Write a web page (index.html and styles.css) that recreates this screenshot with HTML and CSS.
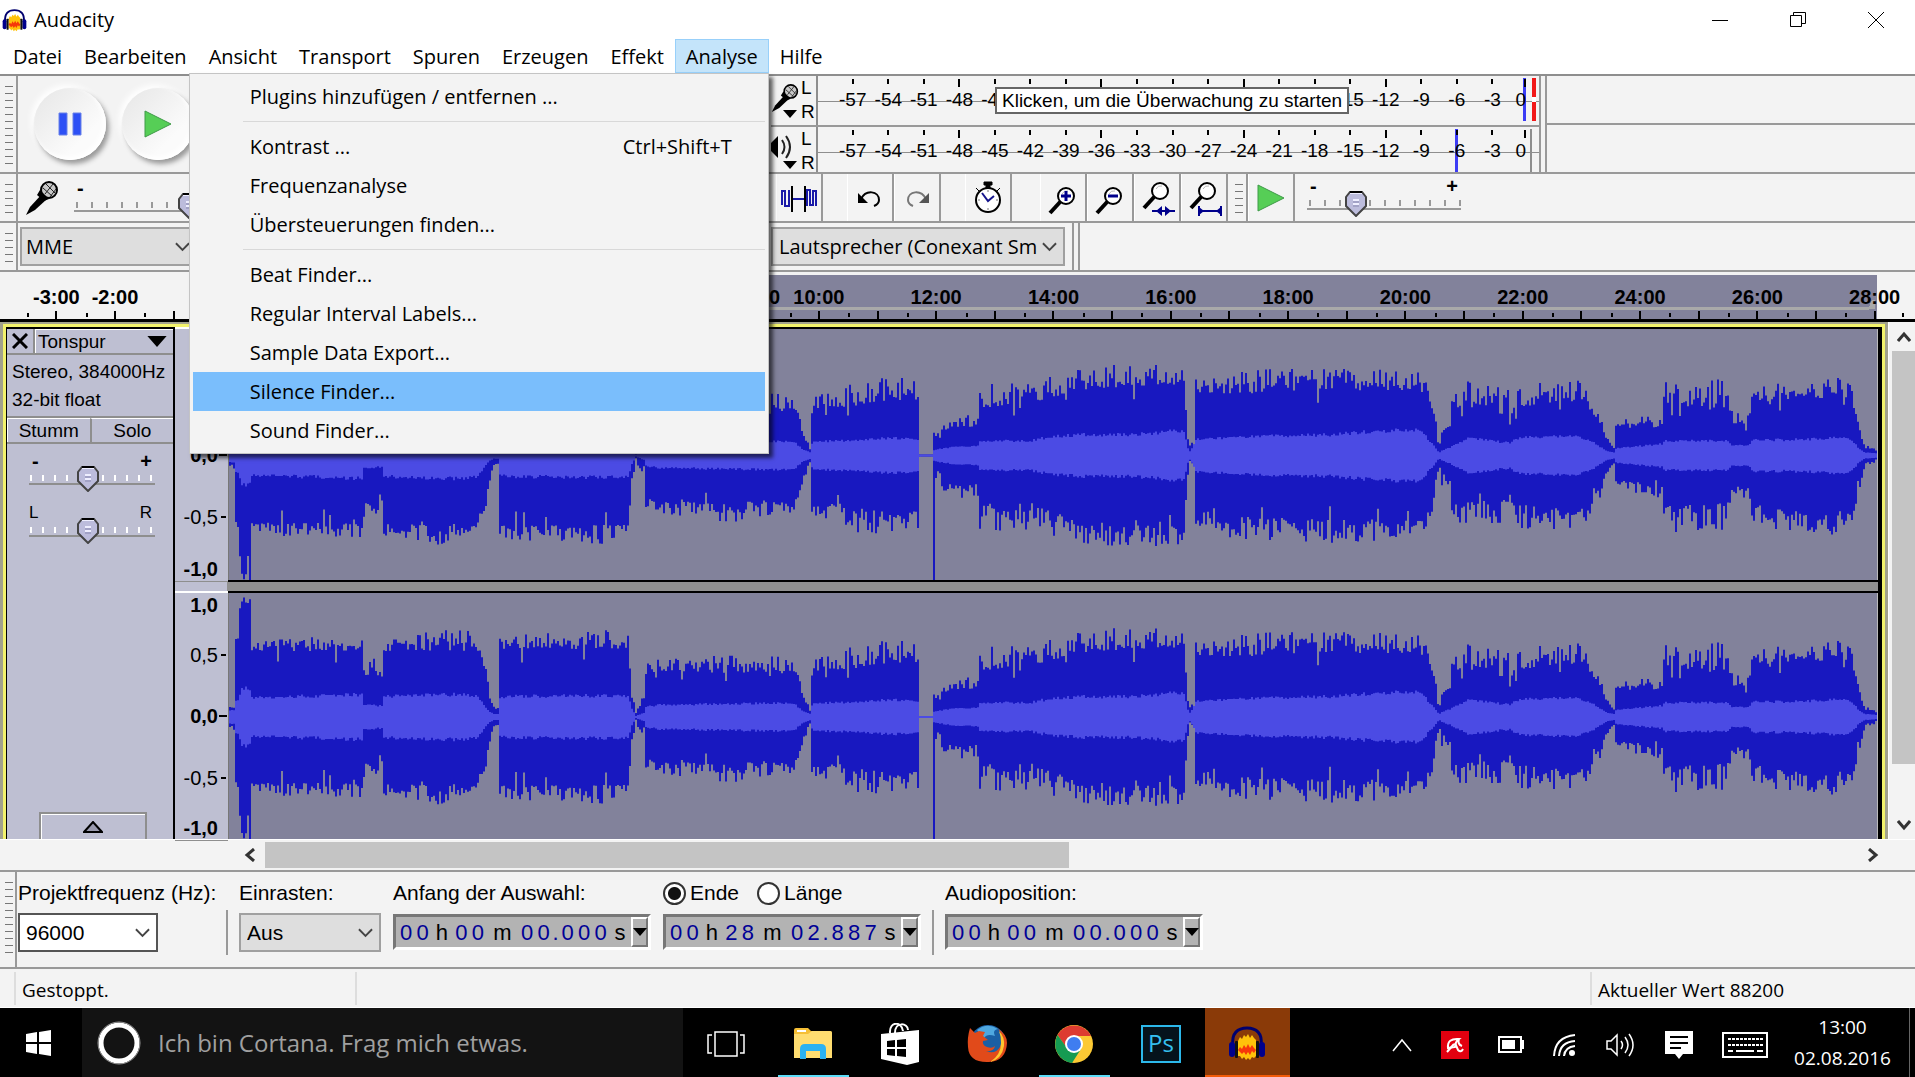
FILE: index.html
```html
<!DOCTYPE html>
<html lang="de">
<head>
    <meta charset="UTF-8">
    <meta name="viewport" content="width=device-width, initial-scale=1.0">
    <title>Audacity</title>
    <link rel="stylesheet" href="styles.css">
</head>
<body>
    <svg width="0" height="0" class="sprites" aria-hidden="true">
        <symbol id="audacity" viewBox="0 0 38 34">
            <path d="M5 20C3 7 10 2 19 2s16 5 14 18" fill="none" stroke="#00006e" stroke-width="3"/>
            <path d="M10 30V15l2-4 2 2 2-4 2 2 2-3 2 4 2-3 2 3 2 2v16l-2 2-2-1-2 3-2-2-2 2-2-3-2 2-2-3z" fill="#ffc20a"/>
            <path d="M10 24l2-3 2 2 2-4 2 3 2-4 2 4 2-3 2 3 2 2-2 3-2-2-2 4-2-3-2 3-2-3-2 2-2-2z" fill="#f6380a"/>
            <rect x="1" y="16" width="6" height="15" rx="3" fill="#00008c"/>
            <rect x="7" y="15" width="3" height="17" rx="1" fill="#111"/>
            <rect x="31" y="16" width="6" height="15" rx="3" fill="#00008c"/>
            <rect x="28" y="15" width="3" height="17" rx="1" fill="#111"/>
        </symbol>
        <symbol id="mic" viewBox="0 0 34 36">
            <path d="M1 35l4-8L17 14l5 5L10 30z" fill="#000"/>
            <circle cx="24" cy="10" r="8" fill="#c8c8c8" stroke="#000" stroke-width="2"/>
            <path d="M18 8l9 8M21 4l9 9M20 14l8-10M25 17l6-8" stroke="#222" stroke-width="1"/>
            <path d="M15 10l9 9-5 2-7-6z" fill="#000"/>
        </symbol>
        <symbol id="chevron" viewBox="0 0 16 10">
            <path d="M1 1l7 7 7-7" fill="none" stroke="#444" stroke-width="2"/>
        </symbol>
        <symbol id="caret" viewBox="0 0 14 8"><path d="M0 0h14L7 8z"/></symbol>
        <symbol id="play" viewBox="0 0 28 28">
            <path d="M1 1l26 13L1 27z" fill="#56ce56" stroke="#3f9a48"/>
        </symbol>
        <symbol id="lens" viewBox="0 0 36 36">
            <path d="M5 28L16 16" stroke="#000" stroke-width="4"/>
            <circle cx="21" cy="11" r="8" fill="#fff" stroke="#000" stroke-width="2"/>
            <path d="M17 9q2-4 6-3" fill="none" stroke="#bbb"/>
        </symbol>
    </svg>

    <header class="title-bar">
        <svg class="app-icon"><use href="#audacity"/></svg>
        <h1 class="app-title">Audacity</h1>
        <button class="window-button" aria-label="Minimieren"><svg width="18" height="18"><path d="M1 9.500h16" stroke="#000"/></svg></button>
        <button class="window-button" aria-label="Wiederherstellen"><svg width="18" height="18"><path d="M1.500 4.500h11v11h-11zM4.500 4V1.500h12v11H13" fill="none" stroke="#000"/></svg></button>
        <button class="window-button" aria-label="Schließen"><svg width="18" height="18"><path d="M1 1l16 16M17 1L1 17" stroke="#000"/></svg></button>
    </header>

    <nav class="menu-bar">
        <button class="menu-title">Datei</button>
        <button class="menu-title">Bearbeiten</button>
        <button class="menu-title">Ansicht</button>
        <button class="menu-title">Transport</button>
        <button class="menu-title">Spuren</button>
        <button class="menu-title">Erzeugen</button>
        <button class="menu-title">Effekt</button>
        <div class="menu-open">
            <button class="menu-title active" aria-expanded="true">Analyse</button>
            <div class="menu-list">
                <button class="menu-item">Plugins hinzufügen / entfernen ...</button>
                <hr class="menu-line">
                <button class="menu-item">Kontrast ...<span class="shortcut">Ctrl+Shift+T</span></button>
                <button class="menu-item">Frequenzanalyse</button>
                <button class="menu-item">Übersteuerungen finden...</button>
                <hr class="menu-line">
                <button class="menu-item">Beat Finder...</button>
                <button class="menu-item">Regular Interval Labels...</button>
                <button class="menu-item">Sample Data Export...</button>
                <button class="menu-item selected">Silence Finder...</button>
                <button class="menu-item">Sound Finder...</button>
            </div>
        </div>
        <button class="menu-title">Hilfe</button>
    </nav>

    <section class="toolbars">
        <div class="toolbar-row tall">
            <div class="toolbar-left">
                <span class="grabber"></span>
                <button class="transport" aria-label="Pause"><svg width="24" height="24"><path d="M1 1h8v22H1zM15 1h8v22h-8z" fill="#2d50f5" stroke="#6a82e8"/></svg></button>
                <button class="transport" aria-label="Wiedergabe"><svg width="28" height="28"><use href="#play"/></svg></button>
            </div>
            <div class="meters">
                <div class="meter-row">
                    <div class="meter-source">
                        <svg width="28" height="36"><use href="#mic"/></svg>
                        <svg class="meter-caret"><use href="#caret"/></svg>
                    </div>
                    <div class="meter-sides"><span>L</span><span>R</span></div>
                    <div class="meter record">
                        <div class="meter-scale"></div>
                        <span class="meter-end"></span>
                    </div>
                    <span class="tooltip">Klicken, um die Überwachung zu starten</span>
                </div>
                <div class="meter-row">
                    <div class="meter-source">
                        <svg width="28" height="36"><path d="M11 9q5 7 0 14M15 5q8 11 0 22" fill="none" stroke="#222" stroke-width="2"/><path d="M0 12l7-7v22l-7-7z"/></svg>
                        <svg class="meter-caret"><use href="#caret"/></svg>
                    </div>
                    <div class="meter-sides"><span>L</span><span>R</span></div>
                    <div class="meter playback">
                        <div class="meter-scale"></div>
                        <span class="meter-end"></span>
                    </div>
                </div>
            </div>
            <span class="toolbar-end"></span>
            <div class="toolbar-empty"><span></span><span></span></div>
        </div>

        <div class="toolbar-row">
            <div class="toolbar-left">
                <span class="grabber"></span>
                <svg class="mixer-icon"><use href="#mic"/></svg>
                <div class="slider">
                    <div class="slider-signs"><span>-</span><span>+</span></div>
                    <input type="range" aria-label="Aufnahmelautstärke" min="0" max="100" value="79">
                </div>
            </div>
            <div class="tool-group">
                <button class="tool" aria-label="Stille"><svg width="38" height="36"><path d="M2 25V11h3v15h4V10M27 26V10h3v15h3V11h3v15M12 19h13" fill="none" stroke="#1a1aa8" stroke-width="2"/><path d="M12 6v26M25 6v26" stroke="#000" stroke-width="2"/></svg></button>
            </div>
            <div class="tool-group">
                <button class="tool" aria-label="Rückgängig"><svg width="36" height="36"><path d="M9 19C14 9 27 11 27 20q0 4-5 6" fill="none" stroke="#000" stroke-width="2"/><path d="M6 13v10h10z"/></svg></button>
                <button class="tool" aria-label="Wiederherstellen"><svg width="36" height="36"><path d="M27 19C22 9 9 11 9 20q0 4 5 6" fill="none" stroke="#777" stroke-width="2"/><path d="M30 13v10H20z" fill="#555"/></svg></button>
            </div>
            <div class="tool-group">
                <button class="tool" aria-label="Sync"><svg width="36" height="36"><circle cx="18" cy="20" r="12" fill="#fff" stroke="#000" stroke-width="2"/><path d="M14 2h8v3h-8zM16 4h4v4h-4zM6 8l4 4M30 8l-4 4" stroke="#000" stroke-width="1"/><path d="M12 13l6 8 6-5" fill="none" stroke="#15158c" stroke-width="2"/><path d="M18 10v2M18 28v2M8 20h2M26 20h2" stroke="#777"/></svg></button>
            </div>
            <div class="tool-group">
                <button class="tool" aria-label="Vergrößern"><svg width="36" height="36"><use href="#lens" y="5"/><path d="M21 11v10M16 16h10" stroke="#00008c" stroke-width="3"/></svg></button>
                <button class="tool" aria-label="Verkleinern"><svg width="36" height="36"><use href="#lens" y="5"/><path d="M16 16h10" stroke="#00008c" stroke-width="3"/></svg></button>
                <button class="tool" aria-label="Auswahl einpassen"><svg width="36" height="36"><use href="#lens"/><path d="M13 31h23" stroke="#00008c" stroke-width="2"/><path d="M23 26v10l-6-5zM26 26v10l6-5z" fill="#00008c"/></svg></button>
                <button class="tool" aria-label="Projekt einpassen"><svg width="36" height="36"><use href="#lens"/><path d="M13 31h22M13 26v10M35 26v10" stroke="#00008c" stroke-width="2"/><path d="M13 27l5 4-5 4zM35 27l-5 4 5 4z" fill="#00008c"/></svg></button>
            </div>
            <span class="grabber"></span>
            <button class="tool" aria-label="Mit Geschwindigkeit abspielen"><svg width="28" height="28"><use href="#play"/></svg></button>
            <div class="slider">
                <div class="slider-signs"><span>-</span><span>+</span></div>
                <input type="range" aria-label="Wiedergabegeschwindigkeit" min="0" max="100" value="29">
            </div>
        </div>

        <div class="toolbar-row">
            <div class="toolbar-left">
                <span class="grabber"></span>
                <div class="combo host">
                    <select aria-label="Audio-Host"><option>MME</option></select>
                    <svg><use href="#chevron"/></svg>
                </div>
            </div>
            <div class="combo device">
                <select aria-label="Wiedergabegerät"><option>Lautsprecher (Conexant Sm</option></select>
                <svg><use href="#chevron"/></svg>
            </div>
            <span class="toolbar-end"></span>
        </div>
    </section>

    <div class="time-ruler" id="timeRuler"></div>

    <main class="workspace">
        <div class="track">
            <section class="track-panel">
                <div class="track-head">
                    <button class="track-close" aria-label="Spur schließen"><svg width="16" height="16"><path d="M1 1l14 14M15 1L1 15" stroke="#000" stroke-width="3"/></svg></button>
                    <button class="track-name">Tonspur<svg width="20" height="11"><use href="#caret"/></svg></button>
                </div>
                <p class="track-info">Stereo, 384000Hz<br>32-bit float</p>
                <div class="track-toggles">
                    <button>Stumm</button>
                    <button>Solo</button>
                </div>
                <div class="slider track-slider">
                    <div class="slider-signs"><span>-</span><span>+</span></div>
                    <input type="range" aria-label="Lautstärke" min="0" max="100" value="46">
                </div>
                <div class="slider track-slider letters">
                    <div class="slider-signs"><span>L</span><span>R</span></div>
                    <input type="range" aria-label="Balance" min="0" max="100" value="46">
                </div>
                <button class="track-collapse" aria-label="Spur einklappen"><svg width="20" height="12"><path d="M1 11L10 1l9 10z" fill="#9a9aae" stroke="#000" stroke-width="2"/></svg></button>
            </section>
            <div class="channels">
                <div class="channel">
                    <div class="level-ruler"><b>1,0</b><span>0,5</span><b>0,0</b><span>-0,5</span><b>-1,0</b></div>
                    <svg class="wave" viewBox="0 0 1648 246" preserveAspectRatio="none"></svg>
                </div>
                <div class="channel">
                    <div class="level-ruler"><b>1,0</b><span>0,5</span><b>0,0</b><span>-0,5</span><b>-1,0</b></div>
                    <svg class="wave" viewBox="0 0 1648 246" preserveAspectRatio="none"></svg>
                </div>
            </div>
        </div>
        <div class="scroll-vertical">
            <button aria-label="Nach oben"><svg width="14" height="12"><path d="M1 10l6-7 6 7" fill="none" stroke="#333" stroke-width="3"/></svg></button>
            <span class="scroll-thumb"></span>
            <button aria-label="Nach unten"><svg width="14" height="12"><path d="M1 2l6 7 6-7" fill="none" stroke="#333" stroke-width="3"/></svg></button>
        </div>
    </main>

    <div class="scroll-horizontal">
        <button aria-label="Nach links"><svg width="12" height="14"><path d="M10 1L3 7l7 6" fill="none" stroke="#333" stroke-width="3"/></svg></button>
        <span class="scroll-thumb"></span>
        <button aria-label="Nach rechts"><svg width="12" height="14"><path d="M2 1l7 6-7 6" fill="none" stroke="#333" stroke-width="3"/></svg></button>
    </div>

    <section class="selection-bar">
        <span class="grabber"></span>
        <div class="field rate">
            <label for="rate">Projektfrequenz (Hz):</label>
            <div class="combo editable">
                <select id="rate"><option>96000</option></select>
                <svg><use href="#chevron"/></svg>
            </div>
        </div>
        <span class="field-divider"></span>
        <div class="field snap">
            <label for="snap">Einrasten:</label>
            <div class="combo">
                <select id="snap"><option>Aus</option></select>
                <svg><use href="#chevron"/></svg>
            </div>
        </div>
        <div class="field">
            <span>Anfang der Auswahl:</span>
            <div class="time-field" data-time="00 h 00 m 00.000 s"></div>
        </div>
        <div class="field">
            <div class="radios">
                <label><input type="radio" name="end" checked>Ende</label>
                <label><input type="radio" name="end">Länge</label>
            </div>
            <div class="time-field" data-time="00 h 28 m 02.887 s"></div>
        </div>
        <span class="field-divider"></span>
        <div class="field">
            <span>Audioposition:</span>
            <div class="time-field" data-time="00 h 00 m 00.000 s"></div>
        </div>
    </section>

    <footer class="status-bar">
        <span class="status-state">Gestoppt.</span>
        <span class="status-message"></span>
        <span class="status-rate">Aktueller Wert 88200</span>
    </footer>

    <div class="taskbar">
        <button class="start" aria-label="Start"><svg width="26" height="26"><path d="M0 4l11-2v10H0zM13 2l12-2v12H13zM0 14h11v10L0 22zM13 14h12v12l-12-2z" fill="#fff"/></svg></button>
        <label class="search">
            <svg width="44" height="44"><circle cx="22" cy="22" r="18" fill="none" stroke="#fff" stroke-width="5"/><circle cx="22" cy="22" r="21" fill="none" stroke="#999"/></svg>
            <input type="text" aria-label="Suche" placeholder="Ich bin Cortana. Frag mich etwas.">
        </label>
        <button class="task" aria-label="Taskansicht"><svg width="38" height="28"><path d="M8 2h22v24H8zM5 5H1v18h4M33 5h4v18h-4" fill="none" stroke="#fff" stroke-width="1.500"/></svg></button>
        <button class="task running" aria-label="Explorer"><svg width="38" height="32"><path d="M0 2q0-2 2-2h12l3 3h19q2 0 2 2v25H0z" fill="#f5bf36"/><path d="M0 6h14l4-3h18q2 0 2 2v25H0z" fill="#ffdd70"/><path d="M3 3h9" stroke="#fff" stroke-width="2"/><path d="M6 31V21q0-5 5-5h16q5 0 5 5v10h-6v-8H12v8z" fill="#2bb2f2"/></svg></button>
        <button class="task" aria-label="Store"><svg width="38" height="42"><path d="M9 10C8-2 21-2 22 8M14 10C14-2 27 0 27 7" fill="none" stroke="#fff" stroke-width="2"/><path d="M0 11l38-4v32l-12 3L0 36z" fill="#fff"/><path d="M6 18l8-1v7H6zM16 17l9-1v8h-9zM6 26h8v7l-8-1zM16 26h9v8l-9-1z"/></svg></button>
        <button class="task" aria-label="Firefox"><svg width="40" height="40"><circle cx="21" cy="19" r="18" fill="#1a5fa4"/><path d="M10 6Q20-2 31 5q-6 1-3 7-8-3-11 2z" fill="#4fa8e0"/><path d="M3 4l5 5 4-2 6 1-2 4 5 4-5 1q-1 4 4 6 5 2 8-1-1 6-9 5 9 4 14-4 4-7 0-15-1-3-3-4 10 6 10 15-1 18-18 19Q2 39 1 23 0 14 3 4z" fill="#e14a1a"/><path d="M32 7q6 6 5 15-2 13-14 16 11-7 11-19 0-7-2-12z" fill="#ffc62e"/></svg></button>
        <button class="task running" aria-label="Chrome"><svg width="40" height="40"><circle cx="20" cy="20" r="19" fill="#fcc934"/><path d="M3.500 11A19 19 0 0 1 37 12H20L12 23z" fill="#dd3b31"/><path d="M3.500 11A19 19 0 0 0 18 39l9-14-14-1z" fill="#159b52"/><circle cx="20" cy="20" r="9" fill="#fff"/><circle cx="20" cy="20" r="7" fill="#3f7df0"/></svg></button>
        <button class="task" aria-label="Photoshop"><span class="photoshop">Ps</span></button>
        <button class="task current" aria-label="Audacity"><svg width="38" height="34"><use href="#audacity"/></svg></button>
        <div class="tray">
            <svg width="20" height="14"><path d="M1 13l9-11 9 11" fill="none" stroke="#fff" stroke-width="1.500"/></svg>
            <svg width="28" height="28"><path d="M0 0h28v28H0z" fill="#e2000f"/><path d="M7 17Q6 7 18 8q-4 3-4 8zM18 8q-2 5 3 7" fill="none" stroke="#fff" stroke-width="2"/><path d="M13 13l-7 8M14 12l3 7q3 3 5-1" fill="none" stroke="#fff" stroke-width="2"/></svg>
            <svg width="26" height="18"><path d="M1 1h22v15H1zM24 5h2v7h-2z" fill="none" stroke="#fff" stroke-width="2"/><path d="M4 4h13v9H4z" fill="#fff"/></svg>
            <svg width="24" height="24"><path d="M1 23Q2 4 22 2M6 23Q7 9 22 8M11 23Q12 14 22 13" fill="none" stroke="#fff" stroke-width="2"/><circle cx="19" cy="20" r="3" fill="#fff"/></svg>
            <svg width="30" height="26"><path d="M1 9h4l6-6v20l-6-6H1zM15 9q3 4 0 8M19 5q6 8 0 16M23 2q8 11 0 22" fill="none" stroke="#fff" stroke-width="1.500"/></svg>
            <svg width="28" height="28"><path d="M0 0h28v23H18l-4 5-4-5H0z" fill="#fff"/><path d="M5 6h18M5 12h18M5 17h11" stroke="#000" stroke-width="2"/></svg>
            <svg width="46" height="26"><path d="M1 1h44v24H1z" fill="none" stroke="#fff" stroke-width="2"/><path d="M6 7h35M6 13h35" stroke="#fff" stroke-width="2" stroke-dasharray="3 1"/><path d="M6 19h5M14 19h18M35 19h6" stroke="#fff" stroke-width="2"/></svg>
        </div>
        <div class="clock"><span>13:00</span><span>02.08.2016</span></div>
    </div>

    <script src="script.js"></script>
</body>
</html>
```
FILE: styles.css
```css
* {
    margin: 0;
    padding: 0;
    box-sizing: border-box;
}

body {
    display: flex;
    flex-direction: column;
    min-height: 100vh;
    background-color: #f3f3f3;
    color: #000;
    font-family: 'Open Sans', 'Noto Sans', sans-serif;
    font-size: 19px;
    overflow-x: hidden;
}

button,
select,
input {
    font: inherit;
    color: inherit;
    background: none;
    border: none;
    border-radius: 0;
}

svg {
    display: block;
    flex: none;
}

.sprites {
    position: absolute;
}

/* Title and menu */
.title-bar {
    display: flex;
    align-items: center;
    height: 39px;
    padding-left: 2px;
    background-color: #fff;
}

.app-icon {
    width: 25px;
    height: 24px;
}

.app-title {
    flex: 1;
    margin-left: 7px;
    font-size: 20px;
    font-weight: 400;
}

.window-button {
    display: flex;
    align-items: center;
    justify-content: center;
    width: 78px;
    height: 39px;
}

.menu-bar {
    display: flex;
    height: 35px;
    padding-left: 2px;
    background-color: #fff;
}

.menu-title {
    height: 34px;
    padding: 0 11px;
    font-size: 20px;
}

.menu-title.active {
    background-color: #c4e4fa;
    outline: 1px solid #98d0fa;
    outline-offset: -1px;
}

.menu-open {
    position: relative;
}

.menu-list {
    position: absolute;
    top: 34px;
    right: 0;
    z-index: 10;
    width: 580px;
    padding: 3px;
    background-color: #f3f3f3;
    border: 1px solid #c4c4c4;
    box-shadow: 4px 4px 4px rgba(0, 0, 0, 0.6);
}

.menu-item {
    display: flex;
    align-items: center;
    justify-content: space-between;
    width: 100%;
    height: 39px;
    padding: 0 33px 1px 57px;
    font-size: 20px;
}

.menu-item.selected {
    background-color: #7abefc;
}

.menu-line {
    height: 1px;
    margin: 5px 0 5px 50px;
    border: none;
    background-color: #d8d8d8;
}

/* Toolbars */
.toolbars {
    border-top: 2px solid #8e8e8e;
}

.toolbar-row {
    display: flex;
    height: 49px;
    border-bottom: 2px solid #999;
}

.toolbar-row.tall {
    height: 98px;
}

.toolbar-left {
    display: flex;
    align-items: center;
    flex: none;
    width: 771px;
}

.grabber {
    align-self: stretch;
    flex: none;
    width: 18px;
    border-right: 2px solid #999;
    background: repeating-linear-gradient(#777 0 1px, transparent 1px 7px) 5px 10px / 8px calc(100% - 18px) no-repeat;
}

.transport {
    display: flex;
    align-items: center;
    justify-content: center;
    width: 72px;
    height: 72px;
    margin-left: 16px;
    border-radius: 50%;
    background: linear-gradient(135deg, #e6e6e6, #fbfbfb 70%);
    box-shadow: 3px 4px 5px #999, -3px -3px 6px #fff, inset -3px -3px 5px #fff;
}

.meters {
    width: 768px;
    flex: none;
}

.meter-row {
    position: relative;
    display: flex;
    height: 49px;
}

.meter-row + .meter-row {
    height: 47px;
    border-top: 2px solid #999;
}

.meter-source {
    width: 28px;
    height: 44px;
    padding-top: 4px;
}

.meter-caret {
    width: 14px;
    height: 8px;
    margin: -6px 0 0 12px;
}

.meter-sides {
    display: flex;
    flex-direction: column;
    width: 17px;
    padding-left: 2px;
    font: 19px/24px 'Liberation Sans', sans-serif;
}

.meter {
    position: relative;
    display: flex;
    flex: 1;
    border-left: 2px solid #8e8e8e;
    background: linear-gradient(#8e8e8e, #8e8e8e) 0 25px / 100% 1px no-repeat;
}

.meter-scale {
    display: flex;
    width: 691px;
    flex: none;
    margin-left: 17px;
}

.meter-mark {
    display: flex;
    flex: 1;
    flex-direction: column;
    align-items: center;
    padding-top: 3px;
    font: 19px/26px 'Liberation Sans', sans-serif;
}

.meter-mark::before {
    content: '';
    width: 2px;
    height: 5px;
    margin-bottom: 3px;
    background-color: #000;
}

.meter-mark.long::before {
    height: 8px;
    margin-bottom: 0;
}

.meter-mark.peak {
    background: linear-gradient(#3c3cf5, #3c3cf5) center 2px / 3px 43px no-repeat;
}

/* The zero stands left of its line */
.meter-mark:last-child {
    flex: none;
    align-items: flex-end;
    width: 16px;
    background-position: right 2px;
}

/* Clip lamp at the end of a meter */
.meter-end {
    position: absolute;
    top: 2px;
    right: 3px;
    width: 4px;
    height: 43px;
    background: linear-gradient(#f21818 0 19px, #fff 19px 24px, #f21818 24px);
}

.playback .meter-end {
    right: 7px;
    width: 2px;
    background: #8e8e8e;
}

.tooltip {
    position: absolute;
    left: 224px;
    top: 11px;
    z-index: 2;
    padding: 0 5px;
    border: 2px solid #666;
    background-color: #fff;
    font: 19px/23px 'Liberation Sans', sans-serif;
    white-space: nowrap;
}

.toolbar-end {
    flex: none;
    width: 8px;
    border-left: 2px solid #999;
    border-right: 2px solid #999;
}

.toolbar-empty {
    display: flex;
    flex: 1;
    flex-direction: column;
}

.toolbar-empty span {
    flex: 1;
}

.toolbar-empty span + span {
    border-top: 2px solid #999;
}

.tool-group {
    display: flex;
    flex: none;
    margin-right: 24px;
}

.tool {
    display: flex;
    align-items: center;
    justify-content: center;
    width: 47px;
    border-right: 2px solid #999;
    border-left: 1px solid #fff;
}

.tool-group:nth-child(2) {
    margin-left: 5px;
}

.tool-group:nth-child(5) {
    margin: 0 2px 0 4px;
}

.mixer-icon {
    width: 36px;
    height: 36px;
    margin: 0 14px 0 6px;
}

/* Sliders */
.slider {
    width: 154px;
    margin-left: 12px;
    padding-top: 3px;
}

.toolbar-left .slider {
    margin-left: 0;
}

.slider-signs {
    display: flex;
    justify-content: space-between;
    height: 14px;
    padding: 0 3px;
    font: bold 20px/18px 'Liberation Sans', sans-serif;
}

.slider input {
    display: block;
    width: 100%;
    height: 26px;
    appearance: none;
    background:
        linear-gradient(#999, #999) 0 17px / 100% 2px no-repeat,
        repeating-linear-gradient(90deg, #999 0 2px, transparent 2px 15px) 2px 9px / 100% 6px no-repeat;
}

.slider input::-webkit-slider-thumb {
    appearance: none;
    width: 22px;
    height: 26px;
    background: url("data:image/svg+xml,%3Csvg xmlns='http://www.w3.org/2000/svg' viewBox='0 0 22 26'%3E%3Cpath d='M5 1h12l4 5v9l-10 10L1 15V6z' fill='%23bcbcdc' stroke='%23444' stroke-width='2'/%3E%3Cpath d='M5 2h12M8 9h6M8 13h6' stroke='%23eef' stroke-width='2'/%3E%3Cpath d='M8 11h6M8 15h6' stroke='%238888b0'/%3E%3Cpath d='M5 1h12' stroke='%23000' stroke-width='2'/%3E%3C/svg%3E") no-repeat;
}

/* Combo boxes */
.combo {
    display: flex;
    align-items: center;
    height: 39px;
    border: 2px solid #a0a0a0;
    background-color: #dedede;
}

.combo.editable {
    border-color: #555;
    background-color: #fff;
}

.combo select {
    width: 100%;
    height: 100%;
    padding-left: 6px;
    appearance: none;
    font-size: 20px;
}

.combo svg {
    width: 15px;
    height: 10px;
    margin: 0 6px 0 -21px;
    pointer-events: none;
}

.host {
    width: 178px;
    margin-left: 2px;
}

.host select {
    padding-left: 4px;
}

.device {
    width: 294px;
    margin: 4px 7px 0 0;
}

/* Timeline */
.time-ruler {
    display: grid;
    grid-template-columns: repeat(32, 1fr);
    height: 50px;
    padding: 4px 11px 0 27px;
    border-bottom: 3px solid #000;
    background:
        linear-gradient(#a9a9a9, #a9a9a9) 229px 35px / calc(100% - 275px) 3px no-repeat,
        linear-gradient(#82829b, #82829b) 229px 3px / calc(100% - 267px) 100% no-repeat;
    font: bold 20px/42px 'Liberation Sans', sans-serif;
}

.time-mark {
    display: flex;
    justify-content: center;
    min-width: 0;
    white-space: nowrap;
    background:
        linear-gradient(#000, #000) left 37px / 2px 4px no-repeat,
        linear-gradient(#000, #000) center 35px / 2px 8px no-repeat;
}

.time-mark:last-child {
    background:
        linear-gradient(#000, #000) left 37px / 2px 4px no-repeat,
        linear-gradient(#000, #000) right 37px / 2px 4px no-repeat,
        linear-gradient(115deg, transparent 50%, #a9a9a9 50%) 20px 24px / 10px 9px no-repeat,
        linear-gradient(#000, #000) center 35px / 2px 8px no-repeat;
}

/* Track */
.workspace {
    display: flex;
    flex: 1;
    min-height: 400px;
}

.track {
    display: flex;
    flex: 1;
    padding: 3px 3px 0;
    border: solid #a2a28c;
    border-width: 2px 3px 0;
    background: #f3f36c;
}

.track-panel {
    display: flex;
    flex-direction: column;
    width: 169px;
    border: solid #000;
    border-width: 2px 2px 0 1px;
    background-color: #bebfd2;
    font: 19px/28px 'Liberation Sans', sans-serif;
}

.track-head,
.track-toggles {
    display: flex;
    height: 26px;
    border-bottom: 2px solid #8e8e8e;
}

.track-close {
    display: flex;
    align-items: center;
    justify-content: center;
    width: 28px;
    border-right: 2px solid #8e8e8e;
}

.track-name {
    display: flex;
    flex: 1;
    align-items: center;
    justify-content: space-between;
    padding: 0 6px 0 2px;
    border: solid #fff;
    border-width: 1px 0 0 1px;
}

.track-info {
    padding: 3px 0 2px 5px;
    border-bottom: 2px solid #8e8e8e;
}

.track-toggles button {
    flex: 1;
    line-height: 22px;
    border: solid #fff;
    border-width: 1px 0 0 1px;
}

.track-toggles button + button {
    border-left: 2px solid #8e8e8e;
}

.track-slider {
    width: 126px;
    margin: 5px 0 0 22px;
}

.track-slider input {
    background:
        linear-gradient(#8e8e8e, #8e8e8e) 0 17px / 100% 2px no-repeat,
        repeating-linear-gradient(90deg, #fff 0 2px, transparent 2px 12px) 1px 9px / 100% 6px no-repeat;
}

.track-slider.letters {
    margin-top: 9px;
}

.letters .slider-signs {
    padding: 0 3px 0 0;
    font-weight: 400;
    font-size: 17px;
}

.track-collapse {
    display: flex;
    align-items: center;
    justify-content: center;
    width: 108px;
    height: 27px;
    margin: auto auto 0 32px;
    border: 2px solid #8e8e8e;
    border-bottom: none;
    box-shadow: inset 1px 1px #fff;
}

.channels {
    display: flex;
    flex: 1;
    flex-direction: column;
    gap: 9px;
    border-right: 4px solid #000;
    background: linear-gradient(#bebfd2, #bebfd2) left / 52px 100% no-repeat, #909090;
}

.channel {
    display: flex;
    flex: 252;
    min-height: 0;
    border-top: 2px solid #000;
    border-bottom: 2px solid #000;
}

.channel:last-child {
    flex-grow: 247;
    border-bottom: none;
}

.level-ruler {
    display: grid;
    grid-template-rows: 24fr 76fr 46fr 76fr 24fr;
    align-items: center;
    justify-items: end;
    flex: none;
    width: 53px;
    margin: -2px 0;
    padding-right: 10px;
    border-top: 2px solid #fff;
    border-bottom: 1px solid #8e8e8e;
    background:
        linear-gradient(#000, #000) 46px 25% / 5px 2px no-repeat,
        linear-gradient(#000, #000) 44px 50% / 8px 2px no-repeat,
        linear-gradient(#000, #000) 46px 75% / 5px 2px no-repeat,
        #bebfd2;
    font: 20px/20px 'Liberation Sans', sans-serif;
}

.wave {
    flex: 1;
    width: 0;
    height: auto;
    min-height: 0;
    border-left: 1px solid #777;
    border-right: 1px solid #bbb;
    background-color: #82829b;
}

.wave-peak {
    fill: #1818c0;
}

.wave-rms {
    fill: #4b4be4;
}

/* Scroll bars */
.scroll-vertical {
    display: flex;
    flex-direction: column;
    width: 27px;
    padding-left: 3px;
    border-left: 1px solid #fff;
}

.scroll-vertical button {
    display: flex;
    align-items: center;
    justify-content: center;
    height: 29px;
}

.scroll-vertical .scroll-thumb {
    flex: 0 0 413px;
    margin-bottom: auto;
}

.scroll-thumb {
    background-color: #c4c4c4;
}

.scroll-horizontal {
    display: flex;
    height: 31px;
    padding: 2px 27px 2px 235px;
    border-top: 1px solid #fff;
}

.scroll-horizontal button {
    display: flex;
    align-items: center;
    justify-content: center;
    width: 30px;
}

.scroll-horizontal .scroll-thumb {
    width: 804px;
    margin-right: auto;
}

/* Selection */
.selection-bar {
    display: flex;
    height: 99px;
    border-top: 2px solid #999;
    border-bottom: 2px solid #999;
    font: 21px/24px 'Liberation Sans', sans-serif;
}

.selection-bar .grabber {
    width: 17px;
}

.field {
    padding: 9px 0 0 1px;
    margin-right: 11px;
    white-space: nowrap;
}

.field .combo {
    margin-top: 8px;
}

.field .combo select {
    font-size: 21px;
}

.rate {
    width: 201px;
    margin-right: 8px;
}

.rate .combo {
    width: 140px;
}

.snap .combo {
    width: 142px;
}

.field-divider {
    width: 2px;
    height: 45px;
    margin: 38px 10px 0 0;
    background-color: #999;
}

.radios {
    display: flex;
    gap: 18px;
}

.radios label {
    display: flex;
    align-items: center;
    gap: 4px;
}

.radios input {
    width: 23px;
    height: 23px;
    appearance: none;
    border: 2px solid #333;
    border-radius: 50%;
    background-color: #fff;
}

.radios input:checked {
    background: radial-gradient(circle, #111 6px, #fff 7px);
}

.time-field {
    display: flex;
    width: 258px;
    height: 36px;
    margin-top: 9px;
    padding-left: 2px;
    border: 3px solid #777;
    border-right-color: #fff;
    border-bottom-color: #fff;
    background-color: #b3b3b3;
    font-size: 22px;
    line-height: 32px;
    text-align: center;
}

.time-field span {
    width: 23px;
}

.time-field .digit {
    width: 17px;
    color: #000096;
}

.time-field .point {
    width: 8px;
    color: #000096;
}

.time-field .minutes {
    width: 34px;
}

.time-field button {
    display: flex;
    align-items: center;
    justify-content: center;
    width: 17px;
    margin-left: auto;
    border: 2px solid #fff;
    border-right-color: #777;
    border-bottom-color: #777;
}

/* Status bar */
.status-bar {
    display: flex;
    height: 39px;
    padding: 3px 0 2px 14px;
    border-bottom: 1px solid #fff;
    line-height: 36px;
}

.status-bar span {
    padding-left: 6px;
    border-left: 2px solid #ddd;
}

.status-state {
    width: 341px;
}

.status-message {
    flex: 1;
}

.status-rate {
    width: 325px;
}

/* Taskbar */
.taskbar {
    display: flex;
    height: 69px;
    background-color: #000;
    color: #fff;
}

.start {
    display: flex;
    align-items: center;
    justify-content: center;
    flex: none;
    width: 82px;
    padding-right: 4px;
}

.search {
    display: flex;
    align-items: center;
    width: 601px;
    padding-left: 15px;
    background-color: #131313;
}

.search input {
    flex: 1;
    margin-left: 17px;
    font-size: 24px;
}

.search input::placeholder {
    color: #a0a0a0;
}

.task {
    display: flex;
    align-items: center;
    justify-content: center;
    width: 87px;
    padding: 2px 1px 0 0;
}

.task.running {
    background: linear-gradient(#5cdcf8, #5cdcf8) center bottom / 71px 2px no-repeat;
}

.task.current {
    width: 85px;
    background-color: #8a3a08;
    border-bottom: 2px solid #f25c0a;
}

.photoshop {
    width: 40px;
    height: 38px;
    border: 2px solid #2cb8ea;
    background-color: #05131c;
    color: #35c0f0;
    font-size: 24px;
    line-height: 32px;
}

.tray {
    display: flex;
    align-items: center;
    gap: 29px;
    margin-left: auto;
    padding-top: 4px;
}

.clock {
    display: flex;
    flex-direction: column;
    justify-content: center;
    width: 142px;
    margin-right: 5px;
    padding-left: 8px;
    border-right: 1px solid #666;
    line-height: 31px;
    text-align: center;
}
```
FILE: script.js
```js
// Envelope of the recording: [x, quietest peak, loudest peak, rms]
const envelope = [
    [0, 8, 13, 6], [5, 9, 13, 7], [6, 65, 85, 16], [10, 75, 112, 20], [12, 110, 124, 28], [20, 115, 124, 28],
    [21, 66, 78, 19], [60, 66, 80, 20], [132, 66, 80, 22], [133, 42, 60, 12], [152, 40, 58, 11], [153, 66, 78, 20],
    [190, 66, 84, 22], [235, 66, 94, 22], [246, 66, 80, 20], [251, 60, 68, 16], [256, 45, 52, 9], [260, 18, 25, 5],
    [264, 9, 12, 3], [269, 7, 9, 3], [270, 68, 82, 20], [398, 68, 88, 21], [399, 60, 65, 18], [402, 20, 30, 8],
    [406, 2, 4, 1], [408, 8, 12, 2], [414, 10, 26, 4], [416, 40, 55, 10], [430, 46, 58, 12], [500, 44, 66, 13],
    [563, 46, 60, 14], [568, 40, 46, 10], [573, 20, 26, 6], [580, 6, 9, 3], [581, 40, 54, 12], [590, 52, 64, 14],
    [605, 46, 58, 14], [620, 48, 76, 15], [660, 54, 80, 17], [688, 55, 80, 16], [689, 1, 1, 1], [702, 1, 1, 1],
    [703, 22, 30, 5], [709, 16, 28, 6], [720, 28, 42, 8], [749, 28, 42, 9], [750, 46, 74, 14], [800, 46, 74, 14],
    [820, 52, 80, 18], [850, 64, 86, 20], [900, 68, 90, 20], [954, 70, 88, 24], [955, 50, 60, 18], [959, 4, 8, 3],
    [964, 10, 18, 10], [965, 62, 76, 15], [1020, 60, 84, 18], [1100, 62, 86, 20], [1160, 64, 84, 24],
    [1190, 64, 82, 24], [1200, 52, 66, 14], [1203, 40, 56, 10], [1207, 18, 26, 5], [1211, 9, 12, 3],
    [1212, 22, 30, 5], [1221, 24, 32, 8], [1222, 46, 66, 10], [1240, 48, 76, 17], [1280, 38, 64, 12],
    [1290, 48, 74, 18], [1350, 54, 76, 18], [1361, 44, 56, 14], [1371, 30, 40, 8], [1375, 18, 22, 5],
    [1384, 7, 10, 3], [1385, 24, 34, 7], [1433, 28, 42, 11], [1434, 48, 78, 14], [1499, 46, 74, 14],
    [1501, 30, 44, 10], [1517, 30, 44, 10], [1524, 50, 66, 15], [1560, 54, 76, 15], [1614, 58, 80, 17],
    [1624, 52, 62, 13], [1629, 24, 36, 6], [1635, 7, 10, 3], [1648, 4, 8, 2]
];

const middle = 124;
const barWidth = 2;

function noise(n) {
    const v = Math.sin(n * 127.1) * 43758.5453;
    return v - Math.floor(v);
}

function sampleAt(x) {
    let i = 1;
    while (i < envelope.length - 1 && envelope[i][0] < x) i++;
    const a = envelope[i - 1];
    const b = envelope[i];
    const t = Math.min(1, Math.max(0, (x - a[0]) / (b[0] - a[0])));
    return a.map((v, k) => v + (b[k] - v) * t);
}

function outline(heightAt) {
    let top = '';
    let bottom = '';
    for (let x = 0; x < 1648; x += barWidth) {
        const [up, down] = heightAt(x);
        top += `L${x} ${(middle - up).toFixed(1)}H${x + barWidth}`;
        bottom = `L${x + barWidth} ${(middle + down).toFixed(1)}H${x}` + bottom;
    }
    return 'M' + top.slice(1) + bottom + 'Z';
}

function drawWave(svg) {
    const peak = outline(x => {
        const [, low, high] = sampleAt(x);
        const shape = seed => low + (high - low) * Math.pow(noise(x + seed), 1.4)
            - (noise(x * 3 + seed) > 0.93 ? low * 0.2 : 0);
        return [shape(5), x === 704 ? 124 : shape(911)];
    });
    const rms = outline(x => {
        const level = sampleAt(x)[3] * (0.93 + noise(x + 77) * 0.18);
        return [level, level];
    });
    svg.innerHTML = `<path class="wave-peak" d="${peak}"/><path class="wave-rms" d="${rms}"/>`;
}

document.querySelectorAll('.wave').forEach(drawWave);

// Timeline: every minute up to 9:00, then every second one; -1:00 stays free
const timeRuler = document.getElementById('timeRuler');
for (let minute = -3; minute <= 28; minute++) {
    const mark = document.createElement('span');
    mark.className = 'time-mark';
    if (minute !== -1 && (minute < 10 || minute % 2 === 0)) mark.textContent = minute + ':00';
    timeRuler.append(mark);
}

// Meter scales in dB
document.querySelectorAll('.meter').forEach(meter => {
    const peak = meter.classList.contains('record') ? 0 : -6;
    for (let db = -57; db <= 0; db += 3) {
        const mark = document.createElement('span');
        mark.className = 'meter-mark';
        if (db % 12 === 0) mark.classList.add('long');
        if (db === peak) mark.classList.add('peak');
        mark.textContent = db;
        meter.querySelector('.meter-scale').append(mark);
    }
});

// Time fields: one cell per character
document.querySelectorAll('.time-field').forEach(field => {
    for (const char of field.dataset.time.replace(/ /g, '')) {
        const cell = document.createElement('span');
        cell.textContent = char;
        if (/\d/.test(char)) cell.className = 'digit';
        if (char === '.') cell.className = 'point';
        if (char === 'm') cell.className = 'minutes';
        field.append(cell);
    }
    field.insertAdjacentHTML('beforeend', '<button aria-label="Format"><svg width="14" height="8"><use href="#caret"/></svg></button>');
});
```
